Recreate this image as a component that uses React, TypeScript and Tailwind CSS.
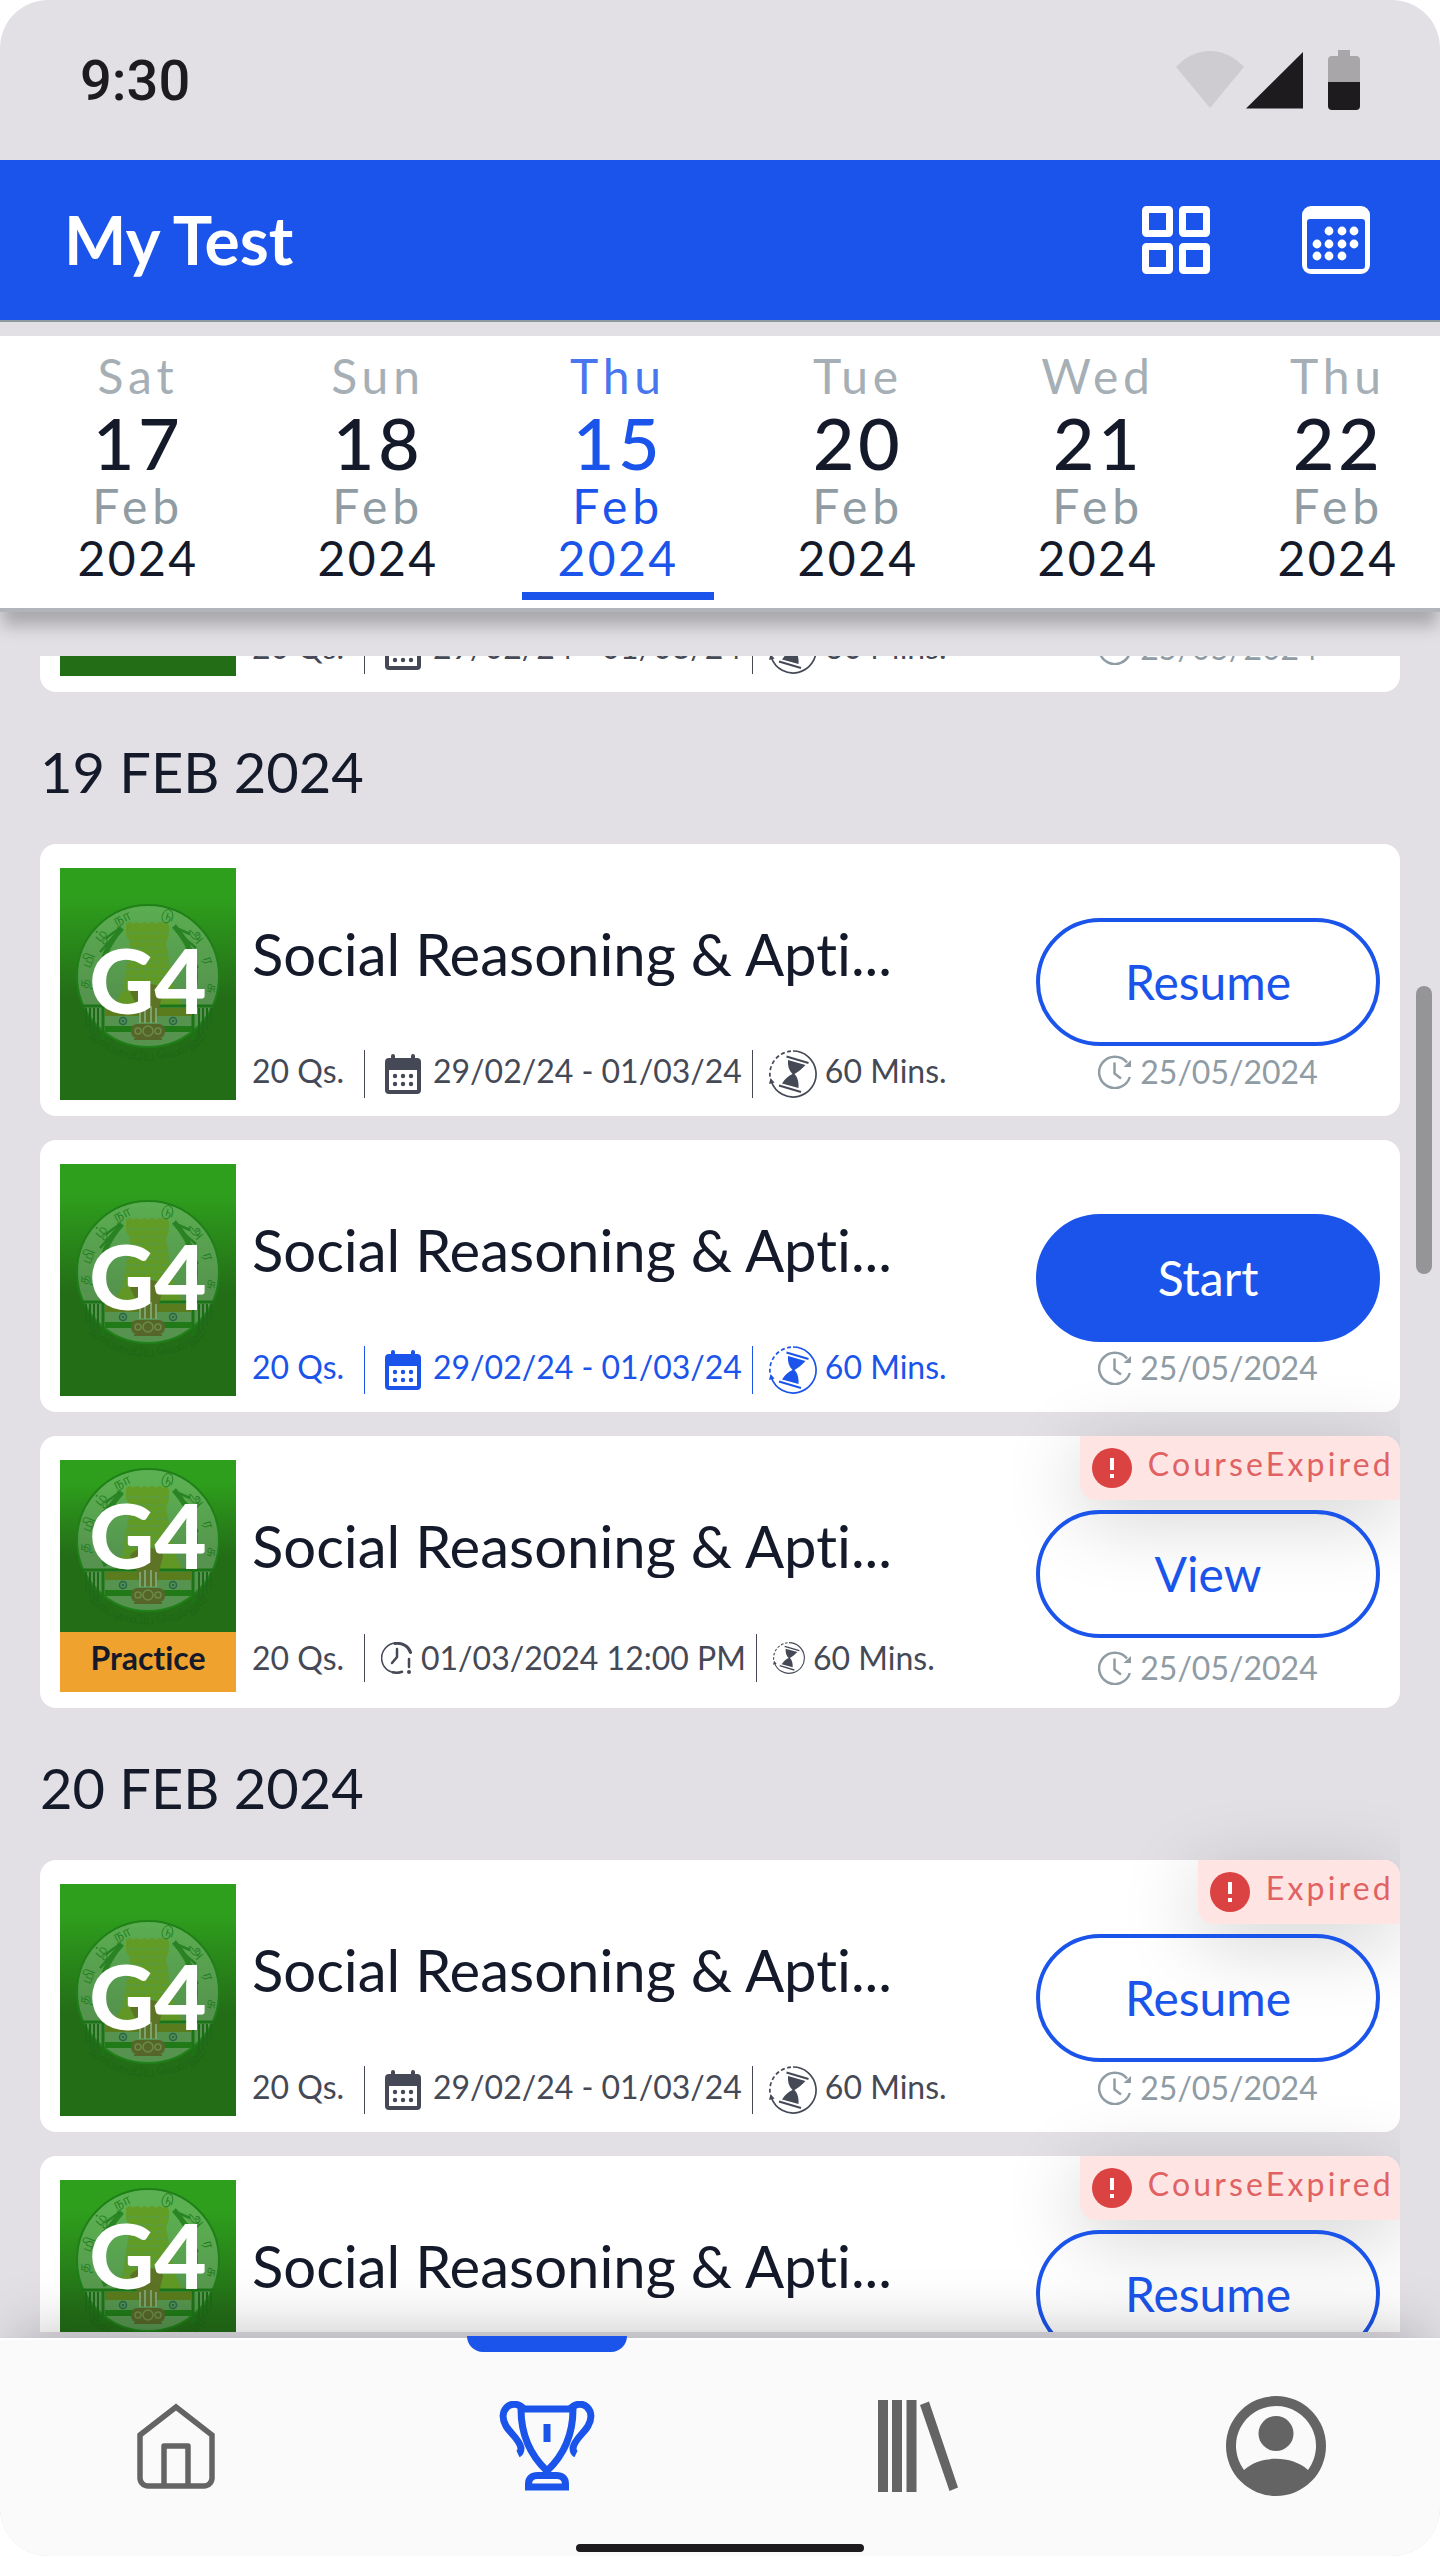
import React from "react";

type Variant = "default" | "active" | "practice";

type Test = {
  id: number;
  variant: Variant;
  schedule: string;
  action: "Resume" | "Start" | "View";
  badge?: string;
  compact?: boolean;
};

const days = [
  { day: "Sat", date: "17" },
  { day: "Sun", date: "18" },
  { day: "Thu", date: "15", selected: true },
  { day: "Tue", date: "20" },
  { day: "Wed", date: "21" },
  { day: "Thu", date: "22" },
];

const range = "29/02/24 - 01/03/24";

const earlier: Test[] = [{ id: 1, variant: "default", schedule: range, action: "Resume" }];

const groups: { heading: string; tests: Test[] }[] = [
  {
    heading: "19 FEB 2024",
    tests: [
      { id: 2, variant: "default", schedule: range, action: "Resume" },
      { id: 3, variant: "active", schedule: range, action: "Start" },
      { id: 4, variant: "practice", schedule: "01/03/2024 12:00 PM", action: "View", badge: "CourseExpired" },
    ],
  },
  {
    heading: "20 FEB 2024",
    tests: [
      { id: 5, variant: "default", schedule: range, action: "Resume", badge: "Expired" },
      { id: 6, variant: "default", schedule: range, action: "Resume", badge: "CourseExpired", compact: true },
    ],
  },
];

function StatusIcons() {
  return (
    <svg width="184" height="60" viewBox="0 0 184 60" aria-hidden="true">
      <path d="M0 17C9 7 21 1 34 1s25 6 34 16L34 58Z" fill="#1d1b1e" opacity=".1" />
      <path d="M127 2v56.500H70Z" fill="#1d1b1e" />
      <path d="M162 0h12v6h6a4 4 0 0 1 4 4v22h-32V10a4 4 0 0 1 4-4h6Z" fill="#a8a6a9" />
      <path d="M152 32h32v24a4 4 0 0 1-4 4h-24a4 4 0 0 1-4-4Z" fill="#1d1b1e" />
    </svg>
  );
}

function GridIcon() {
  return (
    <svg width="68" height="68" viewBox="0 0 68 68" fill="none" stroke="currentColor" strokeWidth="7" aria-hidden="true">
      <rect x="3.500" y="3.500" width="24" height="24" rx="1" />
      <rect x="40.500" y="3.500" width="24" height="24" rx="1" />
      <rect x="3.500" y="40.500" width="24" height="24" rx="1" />
      <rect x="40.500" y="40.500" width="24" height="24" rx="1" />
    </svg>
  );
}

function CalendarDotsIcon() {
  const dots = [
    [27, 25], [40, 25], [52, 25],
    [15, 38], [27, 38], [40, 38], [52, 38],
    [15, 50], [27, 50], [40, 50],
  ];
  return (
    <svg width="68" height="68" viewBox="0 0 68 68" fill="currentColor" aria-hidden="true">
      <path
        fillRule="evenodd"
        d="M9 0h50a9 9 0 0 1 9 9v50a9 9 0 0 1-9 9H9a9 9 0 0 1-9-9V9a9 9 0 0 1 9-9ZM8 13a3 3 0 0 0-3 3v44a3 3 0 0 0 3 3h52a3 3 0 0 0 3-3V16a3 3 0 0 0-3-3Z"
      />
      {dots.map(([x, y]) => (
        <circle key={`${x}-${y}`} cx={x} cy={y} r="4.400" />
      ))}
    </svg>
  );
}

function CalendarIcon() {
  return (
    <svg width="36" height="40" viewBox="0 0 36 40" fill="currentColor" className="shrink-0" aria-hidden="true">
      <path
        fillRule="evenodd"
        d="M6 4V2a2 2 0 0 1 4 0v2h16V2a2 2 0 0 1 4 0v2h2a4 4 0 0 1 4 4v28a4 4 0 0 1-4 4H4a4 4 0 0 1-4-4V8a4 4 0 0 1 4-4ZM4 16v20h28V16Z"
      />
      {[22, 30].map((y) => [10, 18, 26].map((x) => <circle key={`${x}-${y}`} cx={x} cy={y} r="2.200" />))}
    </svg>
  );
}

function HourglassIcon({ size }: { size: number }) {
  return (
    <svg width={size} height={size} viewBox="0 0 48 48" fill="none" stroke="currentColor" className="shrink-0" aria-hidden="true">
      <path d="M24 1a23 23 0 1 1-21.500 31" strokeWidth="1.700" />
      <path d="M22 1.200A23 23 0 0 0 1.200 28" strokeWidth="1.700" strokeDasharray="4 2.500" />
      <path d="M1.500 28 5.500 32.500 0 34Z" fill="currentColor" stroke="none" />
      <path d="m17.500 6.500 22 6.500M10 35.500l22 6.500" strokeWidth="2" />
      <path
        d="m19 10 17.500 5c-3.500 4-7.500 7-11 9 3 3 4.500 8 4 14L13 33.500c3.500-5 6.500-8 10.500-9.500-3.500-3.500-5-8-4.500-14Z"
        fill="currentColor"
        stroke="none"
      />
    </svg>
  );
}

function ClockAlertIcon() {
  return (
    <svg width="32" height="32" viewBox="0 0 32 32" fill="none" stroke="currentColor" strokeLinecap="round" className="shrink-0" aria-hidden="true">
      <path d="M21 30A15 15 0 1 1 16 1" strokeWidth="1.600" />
      <path d="M14 1.500C22 .5 28 5 29.500 10.500" strokeWidth="3" />
      <path d="M16 7v8l-5 6M28 17v8" strokeWidth="2.500" />
      <path d="M12 30.300c3 .7 6 .4 9-.6" strokeWidth="2.500" />
      <circle cx="28" cy="30" r="2" fill="currentColor" stroke="none" />
    </svg>
  );
}

function ClockArrowIcon() {
  return (
    <svg width="34" height="34" viewBox="0 0 34 34" fill="none" stroke="currentColor" strokeWidth="2.500" className="shrink-0" aria-hidden="true">
      <path d="M31.800 22A15.700 15.700 0 1 1 29 7.500" />
      <path d="M16.500 7.500v11l6.500 5" />
      <path d="M33 5v7h-7.500Z" fill="currentColor" stroke="none" />
    </svg>
  );
}

function Emblem({ id }: { id: number }) {
  const letters: [string, number, number, number][] = [
    ["த", 29, 116, -84],
    ["மி", 33, 94, -68],
    ["ழ்", 44, 71, -48],
    ["நா", 64, 54, -26],
    ["டு", 106, 52, 16],
    ["அ", 133, 70, 50],
    ["ர", 144, 94, 74],
    ["சு", 147, 120, 96],
  ];
  return (
    <svg width="160" height="172" viewBox="8 28 160 172" className="shrink-0" aria-hidden="true">
      <circle cx="88" cy="108" r="71" fill="#9cc79c" fillOpacity=".42" stroke="#1f8018" strokeWidth="2" />
      <g opacity=".75">
        <path d="M46 134Q30 96 62 60M130 134q16-40-16-76" fill="none" stroke="#1a7814" strokeWidth="5" />
        <path d="m60 60-14 10m8-2-14 16m8-2-12 18m8 0-6 18M116 60l14 6m-8 2 14 12m-10 0 12 20m-8-4 4 20" stroke="#1a7814" strokeWidth="2.500" />
      </g>
      <g opacity=".8">
        <path d="M66 56q4-4 7 0 4-4 8 0 4-4 7 0 4-4 8 0 4-4 7 0 4-4 6 2v9l-3 8 8 45 8 17H55l8-17 7-45-4-8Z" fill="#649a1c" />
        <path
          d="M67 65h42M70 73h36M69 80h38M68 87h40M67 94h43M65 101h46M64 108h49M63 115h51M61 122h55"
          stroke="#55994a"
          strokeWidth="1.500"
          strokeDasharray="6 3"
        />
      </g>
      <path d="M22 138h132" stroke="#1d7417" strokeWidth="3" />
      <path d="M26 140v20M30 140v24M34 140v28M38 140v30M139 140v30M143 140v26M147 140v22M151 140v16" stroke="#1d6b18" strokeWidth="2" />
      <path d="M43 138v34M133 138v34" stroke="#1d7417" strokeWidth="3" />
      <path d="M45 140h87v8H45Z" fill="#5a7c1c" />
      <path d="M45 158h87v6H45Z" fill="#1f7a17" />
      <g fill="none" stroke="#27654c" strokeWidth="1.500">
        <circle cx="63" cy="153" r="3.500" />
        <circle cx="113" cy="153" r="3.500" />
      </g>
      <g fill="#27654c">
        <circle cx="63" cy="153" r="1.300" />
        <circle cx="113" cy="153" r="1.300" />
      </g>
      <path d="M70 124q4-8 18-8t15 8l-3 12-4 18H80l-4-18Z" fill="#5d7426" />
      <path d="M80 140v15M85 138v17M91 138v17M96 140v15" stroke="#7da173" strokeWidth="2" />
      <rect x="71" y="156" width="34" height="14" rx="6" fill="#56662a" />
      <path d="M74 171h28" stroke="#56662a" strokeWidth="2" />
      <g fill="none" stroke="#6b8a45" strokeWidth="1.500">
        <circle cx="88" cy="163" r="5" />
        <circle cx="78" cy="163" r="3" />
        <circle cx="98" cy="163" r="3" />
      </g>
      <g fill="#1f7d1c" fontFamily="'Noto Sans', sans-serif" fontSize="15" textAnchor="middle">
        {letters.map(([glyph, x, y, turn]) => (
          <text key={glyph} x={x} y={y} transform={`rotate(${turn} ${x} ${y})`}>
            {glyph}
          </text>
        ))}
      </g>
      <path id={`motto-${id}`} d="M14 150A86 86 0 0 0 162 150" fill="none" />
      <text fill="#1e6515" fontFamily="'Noto Sans', sans-serif" fontSize="13">
        <textPath href={`#motto-${id}`} startOffset="50%" textAnchor="middle">
          வாய்மையே வெல்லும்
        </textPath>
      </text>
    </svg>
  );
}

function Cover({ id, practice, raised }: { id: number; practice: boolean; raised: boolean }) {
  return (
    <div className="flex h-[232px] w-[176px] shrink-0 flex-col">
      <div className="relative min-h-0 flex-1 overflow-hidden bg-linear-to-b from-[#2e9f1c] from-13% to-[#236d17] to-56%">
        <div className={raised ? "flex justify-center" : "flex justify-center pt-7"}>
          <Emblem id={id} />
        </div>
        <span
          className={
            raised
              ? "absolute inset-x-0 top-0 text-center text-[90px] leading-[148px] font-black text-white"
              : "absolute inset-x-0 top-0 text-center text-[90px] leading-[222px] font-black text-white"
          }
        >
          G4
        </span>
      </div>
      {practice && (
        <div className="h-15 bg-[#efa22d] text-center text-[32px] leading-[52px] font-bold text-[#151a2a]">Practice</div>
      )}
    </div>
  );
}

function Badge({ label }: { label: string }) {
  return (
    <div className="absolute top-0 right-0 flex h-16 items-center gap-4 rounded-tr-2xl rounded-bl-2xl bg-[#ffe4e4] pr-1.5 pl-3 shadow-[0_16px_80px_rgba(0,0,0,0.2)]">
      <svg width="40" height="40" viewBox="0 0 40 40" aria-hidden="true">
        <circle cx="20" cy="20" r="20" fill="#db4242" />
        <path d="M18 10h4v12h-4ZM18 26h4v4h-4Z" fill="#fff" />
      </svg>
      <span className="pb-2 text-[32px] leading-10 tracking-widest text-[#e06262]">{label}</span>
    </div>
  );
}

function TestCard({ test }: { test: Test }) {
  const practice = test.variant === "practice";
  const active = test.variant === "active";
  return (
    <article className="relative flex gap-4 rounded-2xl bg-white px-5 pt-6 pb-4">
      <Cover id={test.id} practice={practice} raised={practice || Boolean(test.compact)} />
      <div className="flex min-w-0 flex-1 flex-col justify-between pt-[54px]">
        <h3 className="truncate text-[58px] leading-16 text-[#151a2a]">Social Reasoning &amp; Apti...</h3>
        {practice ? (
          <div className="mb-2.5 flex h-12 items-center text-[32px] leading-10 whitespace-nowrap text-[#454956]">
            <span className="mr-4 w-24">20 Qs.</span>
            <span className="mr-4 h-12 w-px bg-current" />
            <ClockAlertIcon />
            <span className="mr-2.5 ml-2">{test.schedule}</span>
            <span className="mr-4 h-12 w-px bg-current" />
            <HourglassIcon size={32} />
            <span className="ml-2">60 Mins.</span>
          </div>
        ) : (
          <div
            className={
              active
                ? "mb-0.5 flex h-12 items-center text-[32px] leading-10 whitespace-nowrap text-[#1a54ea]"
                : "mb-0.5 flex h-12 items-center text-[32px] leading-10 whitespace-nowrap text-[#454956]"
            }
          >
            <span className="mr-4 w-24 pb-1.5">20 Qs.</span>
            <span className="mr-5 h-12 w-px bg-current" />
            <CalendarIcon />
            <span className="mr-2.5 ml-3 pb-1.5">{test.schedule}</span>
            <span className="mr-4 h-12 w-px bg-current" />
            <HourglassIcon size={48} />
            <span className="ml-2 pb-1.5">60 Mins.</span>
          </div>
        )}
      </div>
      {test.badge && <Badge label={test.badge} />}
      <div className="relative flex w-[344px] shrink-0 flex-col items-center pt-[50px]">
        <button
          type="button"
          className={
            active
              ? "h-32 w-full rounded-full border-4 border-[#1a54ea] bg-[#1a54ea] text-[48px] leading-14 text-white"
              : "h-32 w-full rounded-full border-4 border-[#1a54ea] text-[48px] leading-14 text-[#1a54ea]"
          }
        >
          {test.action}
        </button>
        <div
          className={
            practice
              ? "mt-3 flex h-9 items-center gap-2 text-[32px] leading-9 text-[#909ca4]"
              : "mt-2 flex h-9 items-center gap-2 text-[32px] leading-9 text-[#909ca4]"
          }
        >
          <ClockArrowIcon />
          25/05/2024
        </div>
      </div>
    </article>
  );
}

function HomeIcon() {
  return (
    <svg width="78" height="86" viewBox="0 0 78 86" fill="none" stroke="currentColor" strokeWidth="5.500" aria-hidden="true">
      <path d="M3 32 39 4l36 28v43a8 8 0 0 1-8 8H11a8 8 0 0 1-8-8Z" />
      <path d="M27 83V43h24v40" strokeLinejoin="round" />
    </svg>
  );
}

function TrophyIcon() {
  return (
    <svg width="96" height="90" viewBox="0 0 96 90" fill="none" stroke="currentColor" strokeWidth="7" aria-hidden="true">
      <path d="M22 8h52c0 24-7 44-26 62C29 52 22 32 22 8Z" />
      <path d="M25 8C20 2 12 2 8 6 3 11 3 18 7 25c4 7 14 14 15 22 0 3-1 5-3 6M71 8c5-6 13-6 17-2 5 5 5 12 1 19-4 7-14 14-15 22 0 3 1 5 3 6" />
      <path d="M48 23v18" />
      <path d="M29.500 86v-3c0-6 4-8.500 9-8.500h19c5 0 9 2.500 9 8.500v3Z" />
    </svg>
  );
}

function BooksIcon() {
  return (
    <svg width="80" height="92" viewBox="0 0 80 92" fill="currentColor" aria-hidden="true">
      <path d="M0 0h10v92H0ZM14 0h10v92H14ZM28.500 0h10v92h-10ZM42 5l9-3.500L80 87.500 71.500 91Z" />
    </svg>
  );
}

function AvatarIcon() {
  return (
    <svg width="100" height="100" viewBox="0 0 100 100" fill="currentColor" aria-hidden="true">
      <path
        fillRule="evenodd"
        d="M50 0a50 50 0 1 1 0 100A50 50 0 0 1 50 0ZM50 10A40 40 0 0 0 18 74C34 59 66 59 82 74A40 40 0 0 0 50 10Z"
      />
      <circle cx="50" cy="37.500" r="17.500" />
    </svg>
  );
}

const tabs = [
  { label: "Home", icon: <HomeIcon /> },
  { label: "Tests", icon: <TrophyIcon />, selected: true },
  { label: "Library", icon: <BooksIcon /> },
  { label: "Profile", icon: <AvatarIcon /> },
];

export default function App() {
  return (
    <div className="h-screen bg-white pb-1 font-['Lato','Noto_Sans',sans-serif] [font-variant-ligatures:no-common-ligatures]">
      <div className="flex h-full flex-col overflow-hidden rounded-[48px] bg-[#e2e0e5]">
        <div className="flex h-40 shrink-0 items-center justify-between px-20">
          <time className="pt-0.5 font-['Roboto',sans-serif] text-[56px] leading-16 font-medium text-[#1d1b1e]">9:30</time>
          <StatusIcons />
        </div>

        <header className="flex h-[162px] shrink-0 items-center justify-between border-b-2 border-[#8d999f] bg-[#1a54ea] pr-[70px] pl-16 text-white">
          <h1 className="text-[66px] leading-20 font-bold">My Test</h1>
          <div className="flex gap-23">
            <button type="button" aria-label="Grid view">
              <GridIcon />
            </button>
            <button type="button" aria-label="Calendar">
              <CalendarDotsIcon />
            </button>
          </div>
        </header>

        <div className="relative z-10 mt-3.5 shrink-0 border-b-4 border-[#b1b5b9] bg-white pb-2 shadow-[0_16px_16px_-2px_rgba(0,0,0,0.25)]">
          <div className="overflow-hidden">
            <div className="-mr-4.5 ml-4.5 grid grid-cols-6 justify-items-center">
              {days.map(({ day, date, selected }) => (
                <button
                  key={date}
                  type="button"
                  className={
                    selected
                      ? "flex w-48 flex-col items-center border-b-8 border-[#1a54ea] pt-3 pb-2 text-[48px] text-[#1a54ea]"
                      : "flex w-48 flex-col items-center border-b-8 border-transparent pt-3 pb-2 text-[48px] text-[#151a2a]"
                  }
                >
                  <span className={selected ? "leading-14 tracking-widest opacity-80" : "leading-14 tracking-widest text-[#a5afb5]"}>{day}</span>
                  <span className="text-[72px] leading-[76px] font-medium tracking-wider">{date}</span>
                  <span className={selected ? "leading-13 tracking-widest" : "leading-13 tracking-widest text-[#909ca4]"}>Feb</span>
                  <span className="leading-13 tracking-wider">2024</span>
                </button>
              ))}
            </div>
          </div>
        </div>

        <main className="relative mt-11 mb-1.5 min-h-0 flex-1">
          <div className="mx-10 h-full overflow-hidden">
            <div className="-mt-[236px]">
              {earlier.map((test) => (
                <TestCard key={test.id} test={test} />
              ))}
              {groups.map(({ heading, tests }) => (
                <section key={heading}>
                  <h2 className="pt-11 pb-9 text-[56px] leading-[72px] text-[#151a2a]">{heading}</h2>
                  <div className="flex flex-col gap-6">
                    {tests.map((test) => (
                      <TestCard key={test.id} test={test} />
                    ))}
                  </div>
                </section>
              ))}
            </div>
          </div>
          <div className="absolute top-[330px] right-2 h-72 w-4 rounded-full bg-[#959597]" />
        </main>

        <nav className="relative z-10 grid h-[218px] shrink-0 grid-cols-[371fr_371fr_358fr_340fr] border-t-2 border-white bg-[#fafafa] shadow-[0_-20px_56px_-16px_rgba(0,0,0,0.25)]">
          {tabs.map(({ label, icon, selected }) => (
            <div key={label} className="pl-24">
              <a
                href="#"
                aria-label={label}
                className={
                  selected
                    ? "relative flex h-[212px] w-40 items-center justify-center text-[#1a54ea]"
                    : "flex h-[212px] w-40 items-center justify-center text-[#646464]"
                }
              >
                {selected && <span className="absolute -top-1 h-4 w-40 rounded-b-2xl bg-[#1a54ea]" />}
                {icon}
              </a>
            </div>
          ))}
          <span className="absolute bottom-1 left-1/2 h-2 w-72 -translate-x-1/2 rounded-full bg-[#1d1b1e]" />
        </nav>
      </div>
    </div>
  );
}
